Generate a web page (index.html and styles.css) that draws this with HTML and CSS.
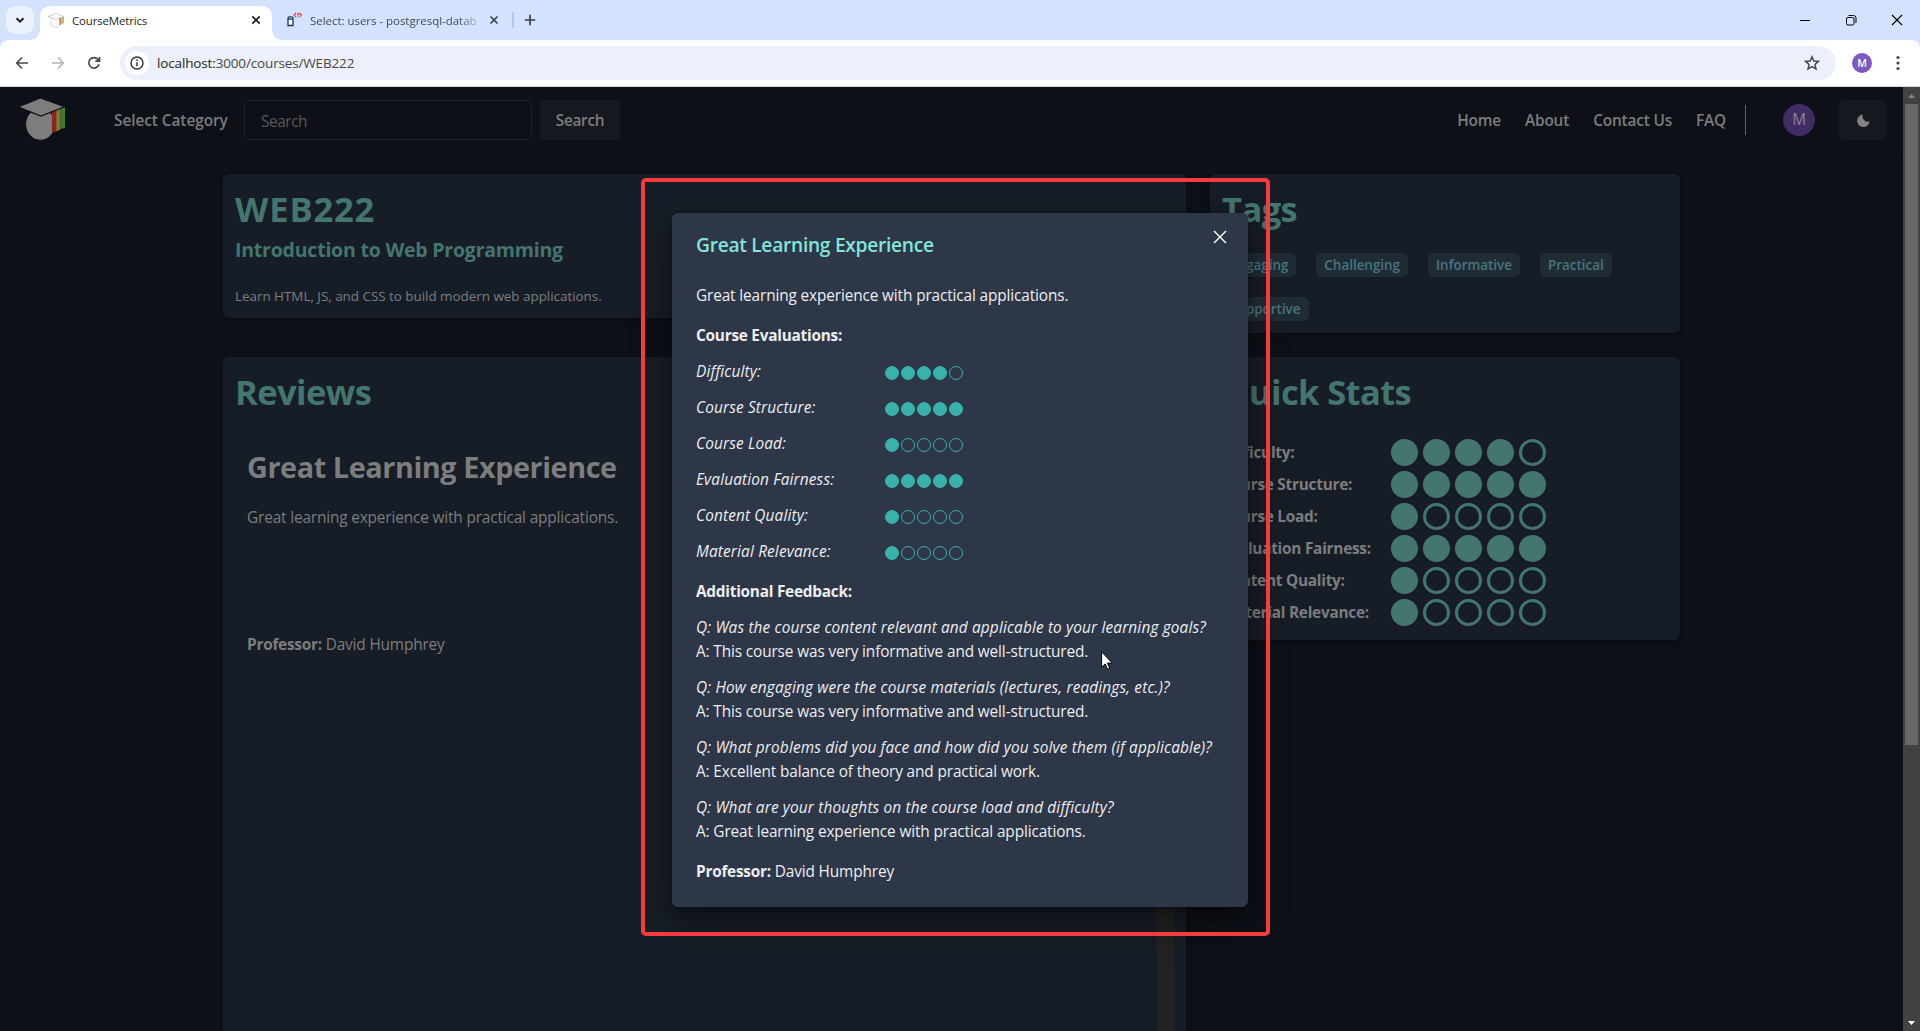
FILE: index.html
```html
<!DOCTYPE html>
<html lang="en">
<head>
<meta charset="utf-8">
<title>CourseMetrics</title>
<link rel="stylesheet" href="styles.css">
</head>
<body>
<svg width="0" height="0" class="defs">
  <symbol id="cap" viewBox="0 0 46 42">
    <ellipse class="cap-body" cx="22" cy="26" rx="14.200" ry="15.300"/>
    <path class="cap-red" d="M33 14l4-1.500v20.500l-4 1z"/>
    <path class="cap-gold" d="M37 12.500l4-1.500v20l-4 2z"/>
    <path class="cap-green" d="M41 11l4.500-1.500v20l-4.500 1z"/>
    <path class="cap-top" d="M.5 9.500L22 .8l23 8.500L22.500 18.200z"/>
  </symbol>
</svg>

<div class="tabstrip">
  <div class="tab-search"><svg width="12" height="12" viewBox="0 0 12 12"><path d="M2.500 4.200L6 7.700l3.500-3.500" fill="none" stroke="#1f1f1f" stroke-width="2"/></svg></div>
  <div class="tab tab-active">
    <svg class="favicon cap-light" width="16" height="15"><use href="#cap"/></svg>
    <span class="tab-title">CourseMetrics</span>
    <svg width="10" height="10" viewBox="0 0 10 10"><path d="M1.300 1.300l7.400 7.400M8.700 1.300L1.300 8.700" stroke="#1f1f1f" stroke-width="1.700"/></svg>
  </div>
  <div class="tab tab-idle">
    <svg width="16" height="16" viewBox="0 0 16 16"><path d="M2 6.500v7h5v-7" fill="#fff" stroke="#0b3a50" stroke-width="1.300"/><ellipse cx="4.500" cy="6" rx="2.500" ry="1.200" fill="#fff" stroke="#0b3a50" stroke-width="1.200"/><path d="M10 1L8 3l2 2M13.500 1l2 2-2 2" fill="none" stroke="#f01818" stroke-width="1.100" stroke-dasharray="1.800 .5"/><path d="M11 1.500h1.500v1.200h-.8v1M11.700 4.400v1" fill="none" stroke="#f01818" stroke-width=".8"/></svg>
    <span class="tab-title">Select: users - postgresql-datab</span>
    <svg width="10" height="10" viewBox="0 0 10 10"><path d="M1.500 1.500l7 7M8.500 1.500l-7 7" stroke="#3a3d42" stroke-width="1.600"/></svg>
  </div>
  <span class="tab-sep"></span>
  <svg class="tab-new" width="12" height="12" viewBox="0 0 12 12"><path d="M6 .8v10.400M.8 6h10.400" stroke="#3c3f43" stroke-width="1.700"/></svg>
  <div class="window-buttons">
    <svg width="12" height="12" viewBox="0 0 12 12"><path d="M1 6.500h10" stroke="#000"/></svg>
    <svg width="12" height="12" viewBox="0 0 12 12" fill="none" stroke="#000"><rect x="1.500" y="3.500" width="7.500" height="7.500" rx="1.500"/><path d="M3.500 1.500h5q2.500 0 2.500 2.500v5"/></svg>
    <svg width="12" height="12" viewBox="0 0 12 12"><path d="M1 1l10 10M11 1L1 11" stroke="#000" stroke-width="1.100"/></svg>
  </div>
</div>
<div class="toolbar">
  <svg class="nav-icon" width="14" height="14" viewBox="0 0 14 14"><path d="M13 7H2M7 1.500L1.700 7 7 12.500" fill="none" stroke="#474747" stroke-width="1.600"/></svg>
  <svg class="nav-icon" width="14" height="14" viewBox="0 0 14 14"><path d="M1 7h11M7 1.500L12.300 7 7 12.500" fill="none" stroke="#b4b4b4" stroke-width="1.600"/></svg>
  <svg class="nav-icon" width="14" height="14" viewBox="0 0 14 14"><path d="M12 8.200a5.200 5.200 0 1 1-1-4.700L12.300 5M12.500 1v4.200H8.300" fill="none" stroke="#474747" stroke-width="1.700"/></svg>
  <div class="omnibox">
    <span class="site-info"><svg width="14" height="14" viewBox="0 0 14 14"><circle cx="7" cy="7" r="6" fill="none" stroke="#333" stroke-width="1.400"/><path d="M7 6.200v4M7 3.500v1.500" stroke="#333" stroke-width="1.500"/></svg></span>
    <span class="url"><b>localhost:</b>3000/courses/WEB222</span>
    <svg class="star" width="16" height="16" viewBox="0 0 16 16"><path d="M8 1.800l1.850 4.150 4.500.45-3.400 3 1 4.450L8 11.500l-3.950 2.350 1-4.450-3.400-3 4.500-.45z" fill="none" stroke="#474747" stroke-width="1.500"/></svg>
  </div>
  <span class="profile">M</span>
  <svg class="menu" width="4" height="16" viewBox="0 0 4 16" fill="#474747"><circle cx="2" cy="2.500" r="1.600"/><circle cx="2" cy="8" r="1.600"/><circle cx="2" cy="13.500" r="1.600"/></svg>
</div>

<div class="viewport">
  <div class="page">
    <header class="site-header">
      <svg class="logo cap-dark" width="49" height="44"><use href="#cap"/></svg>
      <span class="category">Select Category</span>
      <div class="search-input">Search</div>
      <div class="search-button">Search</div>
      <nav class="site-nav"><span>Home</span><span>About</span><span>Contact Us</span><span>FAQ</span></nav>
      <span class="divider"></span>
      <span class="avatar">M</span>
      <div class="theme-button"><svg width="13" height="13" viewBox="0 0 13 13"><path d="M5.800.6A5.200 5.200 0 0 0 12.500 7.300 6.200 6.200 0 1 1 5.800.6z" fill="#828384"/></svg></div>
    </header>

    <main class="columns">
      <div class="main-column">
        <section class="card course">
          <h1>WEB222</h1>
          <h2>Introduction to Web Programming</h2>
          <p class="description">Learn HTML, JS, and CSS to build modern web applications.</p>
        </section>
        <section class="card reviews">
          <div class="review-list">
            <h1>Reviews</h1>
            <article class="review">
              <h3>Great Learning Experience</h3>
              <p>Great learning experience with practical applications.</p>
              <p class="review-professor"><strong>Professor:</strong> David Humphrey</p>
            </article>
          </div>
          <div class="review-track"></div>
        </section>
      </div>
      <aside class="side-column">
        <section class="card">
          <h1>Tags</h1>
          <div class="tags"><span>Engaging</span><span>Challenging</span><span>Informative</span><span>Practical</span><span>Supportive</span></div>
        </section>
        <section class="card">
          <h1>Quick Stats</h1>
          <div class="stats">
            <div class="stat"><strong>Difficulty:</strong><i class="on"></i><i class="on"></i><i class="on"></i><i class="on"></i><i></i></div>
            <div class="stat"><strong>Course Structure:</strong><i class="on"></i><i class="on"></i><i class="on"></i><i class="on"></i><i class="on"></i></div>
            <div class="stat"><strong>Course Load:</strong><i class="on"></i><i></i><i></i><i></i><i></i></div>
            <div class="stat"><strong>Evaluation Fairness:</strong><i class="on"></i><i class="on"></i><i class="on"></i><i class="on"></i><i class="on"></i></div>
            <div class="stat"><strong>Content Quality:</strong><i class="on"></i><i></i><i></i><i></i><i></i></div>
            <div class="stat"><strong>Material Relevance:</strong><i class="on"></i><i></i><i></i><i></i><i></i></div>
          </div>
        </section>
      </aside>
    </main>
  </div>
  <div class="scrollbar">
    <svg width="17" height="17" viewBox="0 0 17 17"><path d="M5 11l3.500-4 3.500 4z" fill="#868686"/></svg>
    <div class="thumb"></div>
    <svg class="arrow-down" width="17" height="17" viewBox="0 0 17 17"><path d="M5 7l3.500 4L12 7z" fill="#fff"/></svg>
  </div>
</div>

<div class="modal">
  <svg class="modal-close" width="14" height="14" viewBox="0 0 14 14"><path d="M1 1l12 12M13 1L1 13" stroke="#f2f3f4" stroke-width="1.500"/></svg>
  <div class="modal-title">Great Learning Experience</div>
  <p class="summary">Great learning experience with practical applications.</p>
  <strong>Course Evaluations:</strong>
  <div class="ratings">
    <div class="rating"><em>Difficulty:</em><i class="on"></i><i class="on"></i><i class="on"></i><i class="on"></i><i></i></div>
    <div class="rating"><em>Course Structure:</em><i class="on"></i><i class="on"></i><i class="on"></i><i class="on"></i><i class="on"></i></div>
    <div class="rating"><em>Course Load:</em><i class="on"></i><i></i><i></i><i></i><i></i></div>
    <div class="rating"><em>Evaluation Fairness:</em><i class="on"></i><i class="on"></i><i class="on"></i><i class="on"></i><i class="on"></i></div>
    <div class="rating"><em>Content Quality:</em><i class="on"></i><i></i><i></i><i></i><i></i></div>
    <div class="rating"><em>Material Relevance:</em><i class="on"></i><i></i><i></i><i></i><i></i></div>
  </div>
  <strong>Additional Feedback:</strong>
  <div class="feedback">
    <div><em>Q: Was the course content relevant and applicable to your learning goals?</em><p>A: This course was very informative and well-structured.</p></div>
    <div><em>Q: How engaging were the course materials (lectures, readings, etc.)?</em><p>A: This course was very informative and well-structured.</p></div>
    <div><em>Q: What problems did you face and how did you solve them (if applicable)?</em><p>A: Excellent balance of theory and practical work.</p></div>
    <div><em>Q: What are your thoughts on the course load and difficulty?</em><p>A: Great learning experience with practical applications.</p></div>
  </div>
  <p><strong>Professor:</strong> David Humphrey</p>
</div>
<div class="highlight"></div>
<svg class="cursor" width="13" height="19" viewBox="0 0 13 19"><path d="M.6.800v15.500l3.500-3.300 2.400 5.300 2.300-1-2.400-5.200h4.900z" fill="#fff" stroke="#000" stroke-width="1"/></svg>
</body>
</html>
```
FILE: styles.css
```css
* { box-sizing: border-box; }
body {
  margin: 0;
  width: 1920px;
  height: 1031px;
  overflow: hidden;
  position: relative;
  display: flex;
  flex-direction: column;
  font: 15.36px/24px "Open Sans", "Noto Sans", sans-serif;
  letter-spacing: -0.008em;
  color: #7c7d7e;
  background: #0d1017;
}
h1, h2, h3, p { margin: 0; }
svg { display: block; flex: none; }
strong { letter-spacing: -0.016em; }
.defs { position: absolute; }

/* Browser chrome */
.tabstrip {
  height: 40px;
  flex: none;
  display: flex;
  align-items: center;
  padding-left: 6px;
  background: #d3e3fd;
  font-size: 11.5px;
}
.tab-search {
  width: 28px;
  height: 28px;
  border-radius: 10px;
  background: #ebf1fd;
  display: flex;
  align-items: center;
  justify-content: center;
}
.tab { display: flex; align-items: center; }
.tab-active {
  position: relative;
  width: 232px;
  height: 34px;
  margin: 6px 0 0 6px;
  padding: 0 11px 6px 8px;
  border-radius: 10px 10px 0 0;
  background: #fff;
  color: #1f1f1f;
}
.tab-active::before, .tab-active::after {
  content: "";
  position: absolute;
  bottom: 0;
  width: 10px;
  height: 10px;
}
.tab-active::before { left: -10px; background: radial-gradient(circle at 0 0, transparent 9.500px, #fff 10px); }
.tab-active::after { right: -10px; background: radial-gradient(circle at 100% 0, transparent 9.500px, #fff 10px); }
.tab-title { flex: 1; margin-left: 8px; padding-top: 1px; white-space: nowrap; overflow: hidden; line-height: 20px; letter-spacing: -0.015em; }
.tab-idle { width: 213px; margin-left: 14px; color: #45494f; }
.tab-idle .tab-title { flex: none; width: 167px; margin-right: 12px; letter-spacing: -0.003em; -webkit-mask-image: linear-gradient(90deg, #000 148px, transparent 174px); mask-image: linear-gradient(90deg, #000 148px, transparent 174px); }
.tab-sep { width: 2px; height: 16px; margin-left: 13px; background: #a8c7fa; }
.tab-new { margin-left: 10px; }
.window-buttons { display: flex; gap: 34px; margin-left: auto; padding-right: 17px; }
.toolbar {
  height: 47px;
  flex: none;
  display: flex;
  align-items: center;
  padding: 0 20px 0 15px;
  border-bottom: 1px solid #d5d7da;
  background: radial-gradient(circle at 8px 8px, #fff 7.500px, #d3e3fd 8px) 0 0 / 8px 8px no-repeat,
    radial-gradient(circle at 0 8px, #fff 7.500px, #d3e3fd 8px) 100% 0 / 8px 8px no-repeat, #fff;
}
.nav-icon { margin-right: 22px; }
.omnibox {
  width: 1716px;
  height: 34px;
  margin-left: -3px;
  padding: 0 16px 0 5px;
  border-radius: 17px;
  background: #ebf0fa;
  display: flex;
  align-items: center;
}
.site-info {
  width: 24px;
  height: 24px;
  border-radius: 50%;
  background: #fff;
  display: flex;
  align-items: center;
  justify-content: center;
}
.url { margin-left: 8px; font-size: 13.500px; letter-spacing: -0.011em; color: #474747; }
.url b { font-weight: 400; color: #1f1f1f; }
.star { margin-left: auto; }
.profile, .avatar {
  border-radius: 50%;
  display: flex;
  align-items: center;
  justify-content: center;
  flex: none;
}
.profile { width: 20px; height: 20px; margin-left: 16px; background: #7e57c2; color: #fff; font-size: 10.500px; font-weight: 600; }
.menu { margin-left: auto; }

/* Page frame */
.viewport { flex: 1; min-height: 0; display: flex; }
.page { flex: 1; overflow: hidden; }
.scrollbar { width: 17px; background: #424242; display: flex; flex-direction: column; }
.thumb { width: 13px; height: 641px; margin-left: 2px; background: #686868; }
.arrow-down { margin-top: auto; }
.site-header {
  height: 67px;
  padding: 0 16px 0 17px;
  display: flex;
  align-items: center;
  border-bottom: 1px solid #090b0f;
  font-weight: 600;
}
.logo { margin-top: -3px; }
.cap-dark { --shell: #7d7d7d; --edge: #0d1017; --red: #8f2320; --gold: #8c7430; --green: #3f7a33; }
.cap-light { --shell: #fff; --edge: #8c8c8c; --red: #f04a3a; --gold: #f0c040; --green: #6fd052; }
.cap-body { fill: var(--shell); stroke: var(--edge); stroke-width: 1; }
.cap-top { fill: var(--shell); stroke: var(--edge); stroke-width: 1.200; }
.favicon .cap-body, .favicon .cap-top { stroke-width: 2; }
.cap-red { fill: var(--red); }
.cap-gold { fill: var(--gold); }
.cap-green { fill: var(--green); }
.category { width: 114px; margin: 2px 16px 0 48px; white-space: nowrap; letter-spacing: -0.003em; }
.search-input {
  width: 288px;
  height: 40px;
  padding: 9px 16px 0;
  border: 1px solid #202226;
  border-radius: 6px;
  font-weight: 400;
  letter-spacing: -0.028em;
  color: #55585c;
}
.search-button, .theme-button {
  height: 40px;
  border-radius: 6px;
  background: #15181f;
  display: flex;
  align-items: center;
  justify-content: center;
}
.search-button { width: 80px; margin-left: 8px; padding-top: 2px; letter-spacing: -0.020em; }
.site-nav { display: flex; gap: 24px; margin-left: auto; padding-top: 2px; letter-spacing: -0.010em; }
.divider { width: 1px; height: 30px; margin-left: 19px; background: #606266; }
.avatar { width: 32px; height: 32px; margin: 0 24px 0 37px; background: #402c64; color: #8c8596; font-weight: 400; }
.theme-button { width: 48px; }

/* Course page */
.columns { display: flex; gap: 24px; width: 1457px; margin: 20px 0 0 223px; }
.main-column { width: 963px; display: flex; flex-direction: column; gap: 39px; }
.side-column { width: 470px; display: flex; flex-direction: column; gap: 24px; }
.card { padding: 12px; border-radius: 6px; background: #171d26; box-shadow: 0 2px 4px rgba(0, 0, 0, 0.3); }
h1 { padding-top: 1px; font-size: 34.560px; line-height: 43px; font-weight: 700; letter-spacing: -0.018em; color: #43766e; }
h2 { margin-top: 8px; font-size: 19.500px; line-height: 24px; letter-spacing: -0.011em; color: #43766e; }
.course { height: 144px; }
.course h1 { letter-spacing: 0.024em; }
.description { margin-top: 24px; font-size: 13.440px; line-height: 21px; letter-spacing: -0.002em; }
.reviews { height: 720px; padding-bottom: 0; display: flex; }
.reviews h1, .side-column h1 { letter-spacing: -0.018em; }
.review-list { flex: 1; }
.review-track { width: 17px; background: #222222; }
.review { padding: 36px 12px 0; }
.review h3 { font-size: 28.800px; line-height: 36px; letter-spacing: -0.0145em; margin-bottom: 21px; }
.review p { letter-spacing: -0.0095em; }
.review-professor { margin-top: 103px; }
.tags { display: flex; flex-wrap: wrap; gap: 20px; margin-top: 23px; }
.tags span {
  height: 24px;
  padding: 0 8px;
  border-radius: 6px;
  background: #202c34;
  color: #457680;
  font-size: 13.440px;
  font-weight: 600;
  letter-spacing: -0.001em;
}
.stats { margin-top: 23px; }
.stat { height: 32px; display: flex; align-items: center; }
.stat strong { width: 169px; padding-top: 2px; white-space: nowrap; }
.stat i { width: 27px; height: 27px; margin-right: 5px; border: 3px solid #43766e; border-radius: 50%; }
.stat .on { background: #43766e; }
.side-column .card:last-child { height: 283px; }

/* Review dialog */
.modal {
  position: absolute;
  left: 672px;
  top: 213px;
  width: 576px;
  height: 694px;
  padding: 16px 24px;
  border-radius: 6px;
  background: #2d3748;
  color: #edeef0;
  box-shadow: 0 0 0 1px rgba(0, 0, 0, 0.1), 0 5px 10px rgba(0, 0, 0, 0.2), 0 15px 40px rgba(0, 0, 0, 0.4);
}
.modal > strong { display: block; margin-top: 16px; }
.modal em { display: block; letter-spacing: 0.010em; white-space: nowrap; }
.modal-close { position: absolute; top: 17px; right: 21px; }
.modal-title { font-size: 19.200px; line-height: 30px; padding-top: 1px; font-weight: 600; letter-spacing: -0.015em; color: #81e6d9; }
.summary { margin-top: 24px; }
.ratings, .feedback { display: flex; flex-direction: column; gap: 12px; margin: 12px 0 16px; }
.rating { display: flex; height: 24px; }
.rating em { width: 189px; }
.rating i { width: 14px; height: 14px; margin: 6px 2px 0 0; border: 1px solid #38b2ac; border-radius: 50%; }
.rating .on { background: #38b2ac; }
.highlight { position: absolute; left: 641px; top: 178px; width: 629px; height: 758px; border: 4px solid #f53b3c; border-radius: 5px; }
.cursor { position: absolute; left: 1101px; top: 651px; }
```
